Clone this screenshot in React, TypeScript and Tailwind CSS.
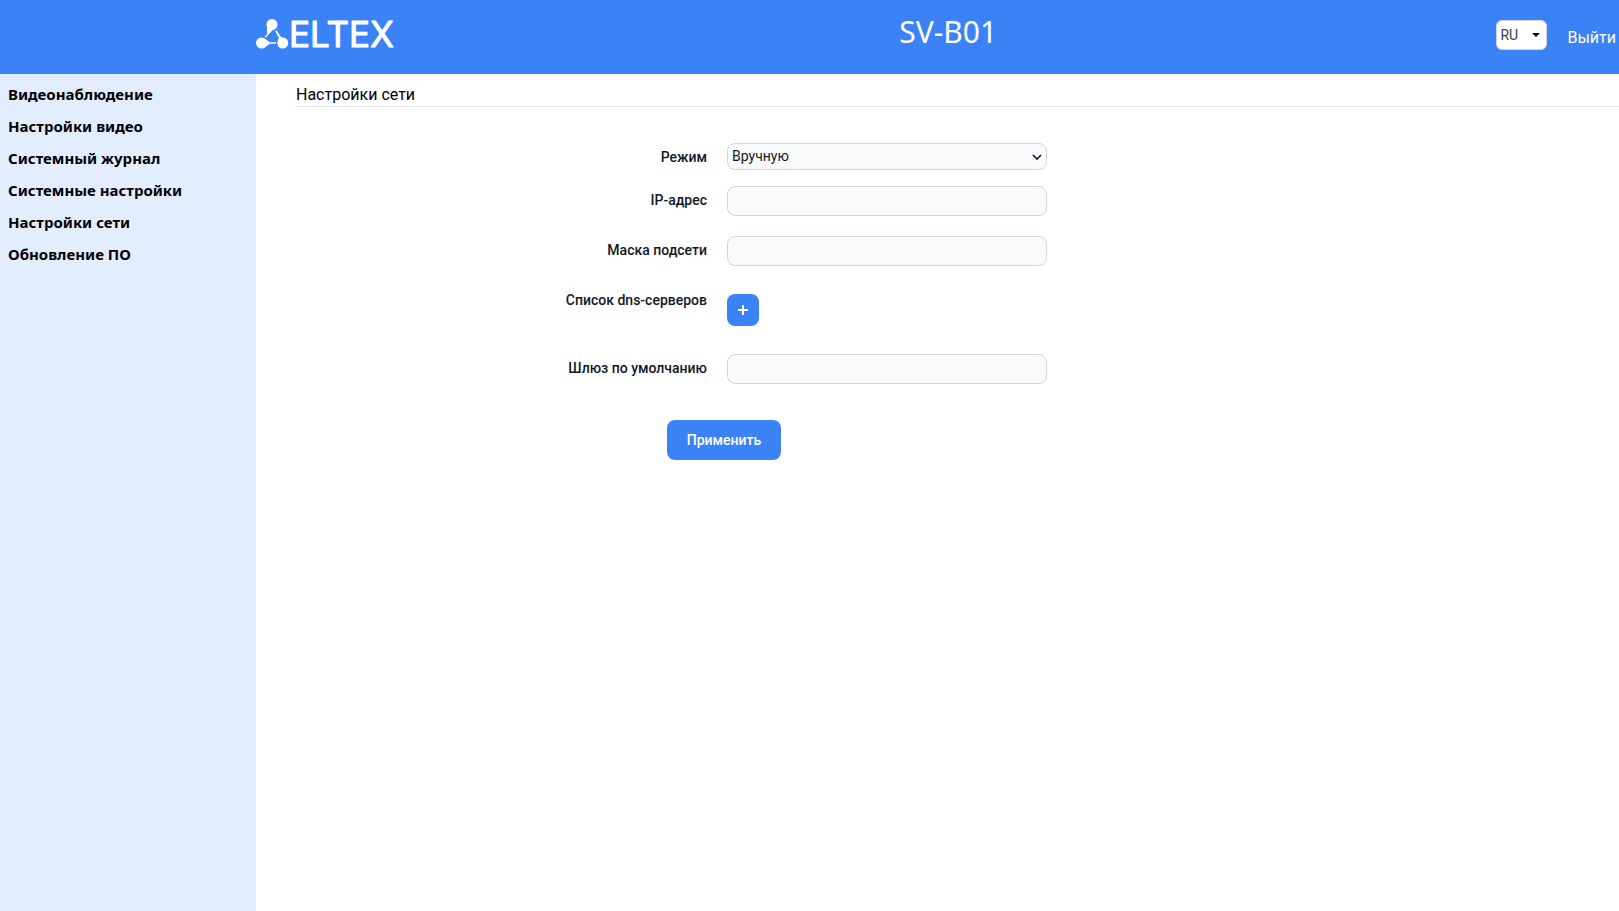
import { useState } from 'react';

const menu = [
  'Видеонаблюдение',
  'Настройки видео',
  'Системный журнал',
  'Системные настройки',
  'Настройки сети',
  'Обновление ПО',
];

const labelClass = 'w-1/3 pt-1 pr-5 text-right text-sm font-medium text-[#111827]';
const inputClass =
  'h-[30px] w-80 rounded-lg border border-[#d1d5db] bg-[#f9fafb] px-2 text-sm text-[#111827]';

function Logo() {
  return (
    <svg width="140" height="30" viewBox="0 1 140 30" className="overflow-visible" fill="white">
      <circle cx="16" cy="5.5" r="5.5" />
      <circle cx="5.5" cy="24" r="5.5" />
      <circle cx="26.7" cy="24" r="5.5" />
      {/* each node has a tail that narrows towards the next one */}
      <path d="M11 8 L11 15 L8.6 18 L10.2 18.6 L12.6 15.4 L17 10.8 Z" />
      <path d="M8 19.2 L14 23.2 H20 V24.8 H14 L8 28.8 Z" />
      <path d="M31.5 21 L24.5 17.6 L20.6 11.2 L19.3 12 L22.6 18.6 L22 26 Z" />
      <text
        x="33"
        y="28"
        fontSize="35"
        fontWeight="400"
        stroke="white"
        strokeWidth="1"
        strokeLinejoin="round"
        className="font-['Inter',sans-serif]"
      >
        ELTEX
      </text>
    </svg>
  );
}

export default function App() {
  const [lang, setLang] = useState('RU');
  const [mode, setMode] = useState('manual');

  return (
    <div className="flex min-h-screen flex-col bg-white font-['Roboto',sans-serif]">
      <header className="flex h-[74px] items-start justify-between bg-[#3b82f6] pt-5 pr-[3px] pl-64 text-white">
        <Logo />
        <h1 className="-mt-1.5 pl-1 font-['Noto_Sans',sans-serif] text-3xl">SV-B01</h1>
        <div className="flex items-start gap-5">
          <div className="relative">
            <select
              aria-label="Язык"
              value={lang}
              onChange={(e) => setLang(e.target.value)}
              className="h-[30px] w-[51px] appearance-none rounded-md border border-[#d1d5db] bg-white pl-[3px] text-sm text-[#374151]"
            >
              <option>RU</option>
              <option>EN</option>
            </select>
            <svg className="pointer-events-none absolute top-[13px] right-[7px]" width="8" height="4" viewBox="0 0 8 4">
              <path d="M0 0 H8 L4 4 Z" fill="black" />
            </svg>
          </div>
          <a href="#logout" className="pt-1.5 leading-6">
            Выйти
          </a>
        </div>
      </header>

      <div className="flex grow">
        <nav className="w-64 shrink-0 bg-[#e2eeff] px-2 pt-1">
          {menu.map((item) => (
            <a
              key={item}
              href="#menu"
              className="block py-1 font-['Noto_Sans',sans-serif] text-[15px] leading-6 font-bold text-black"
            >
              {item}
            </a>
          ))}
        </nav>

        <main className="grow pt-2 pl-10">
          <h2 className="border-b border-[#e5e7eb] pt-0.5 leading-[22px] text-black">Настройки сети</h2>
          <form className="mt-9 mr-[30px]" onSubmit={(e) => e.preventDefault()}>
            <div className="mb-4 flex">
              <label htmlFor="mode" className={labelClass}>
                Режим
              </label>
              <div className="relative">
                <select
                  id="mode"
                  value={mode}
                  onChange={(e) => setMode(e.target.value)}
                  className="block h-[27px] w-80 appearance-none rounded-lg border border-[#d1d5db] bg-[#f9fafb] pb-0.5 pl-1 text-sm text-[#111827]"
                >
                  <option value="manual">Вручную</option>
                  <option value="dhcp">DHCP</option>
                </select>
                <svg
                  className="pointer-events-none absolute top-[11px] right-[5px]"
                  width="10"
                  height="7"
                  viewBox="0 0 10 7"
                  fill="none"
                  stroke="#111827"
                  strokeWidth="1.6"
                >
                  <path d="M1 1 L5 5 L9 1" />
                </svg>
              </div>
            </div>
            <div className="mb-5 flex">
              <label htmlFor="ip" className={labelClass}>
                IP-адрес
              </label>
              <input id="ip" type="text" className={inputClass} />
            </div>
            <div className="mb-5 flex">
              <label htmlFor="mask" className={labelClass}>
                Маска подсети
              </label>
              <input id="mask" type="text" className={inputClass} />
            </div>
            <div className="mb-7 flex">
              <label htmlFor="add-dns" className={labelClass}>
                Список dns-серверов
              </label>
              <button
                id="add-dns"
                type="button"
                className="mt-2 flex size-8 items-center justify-center rounded-lg bg-[#3b82f6]"
              >
                <svg width="10" height="10" viewBox="0 0 10 10" stroke="white" strokeWidth="2">
                  <path d="M5 0 V10 M0 5 H10" />
                </svg>
              </button>
            </div>
            <div className="mb-9 flex">
              <label htmlFor="gateway" className={labelClass}>
                Шлюз по умолчанию
              </label>
              <input id="gateway" type="text" className={inputClass} />
            </div>
            <div className="flex w-2/3 justify-center pr-1.5">
              <button type="submit" className="rounded-lg bg-[#3b82f6] px-5 py-2.5 text-sm font-medium text-white">
                Применить
              </button>
            </div>
          </form>
        </main>
      </div>
    </div>
  );
}
